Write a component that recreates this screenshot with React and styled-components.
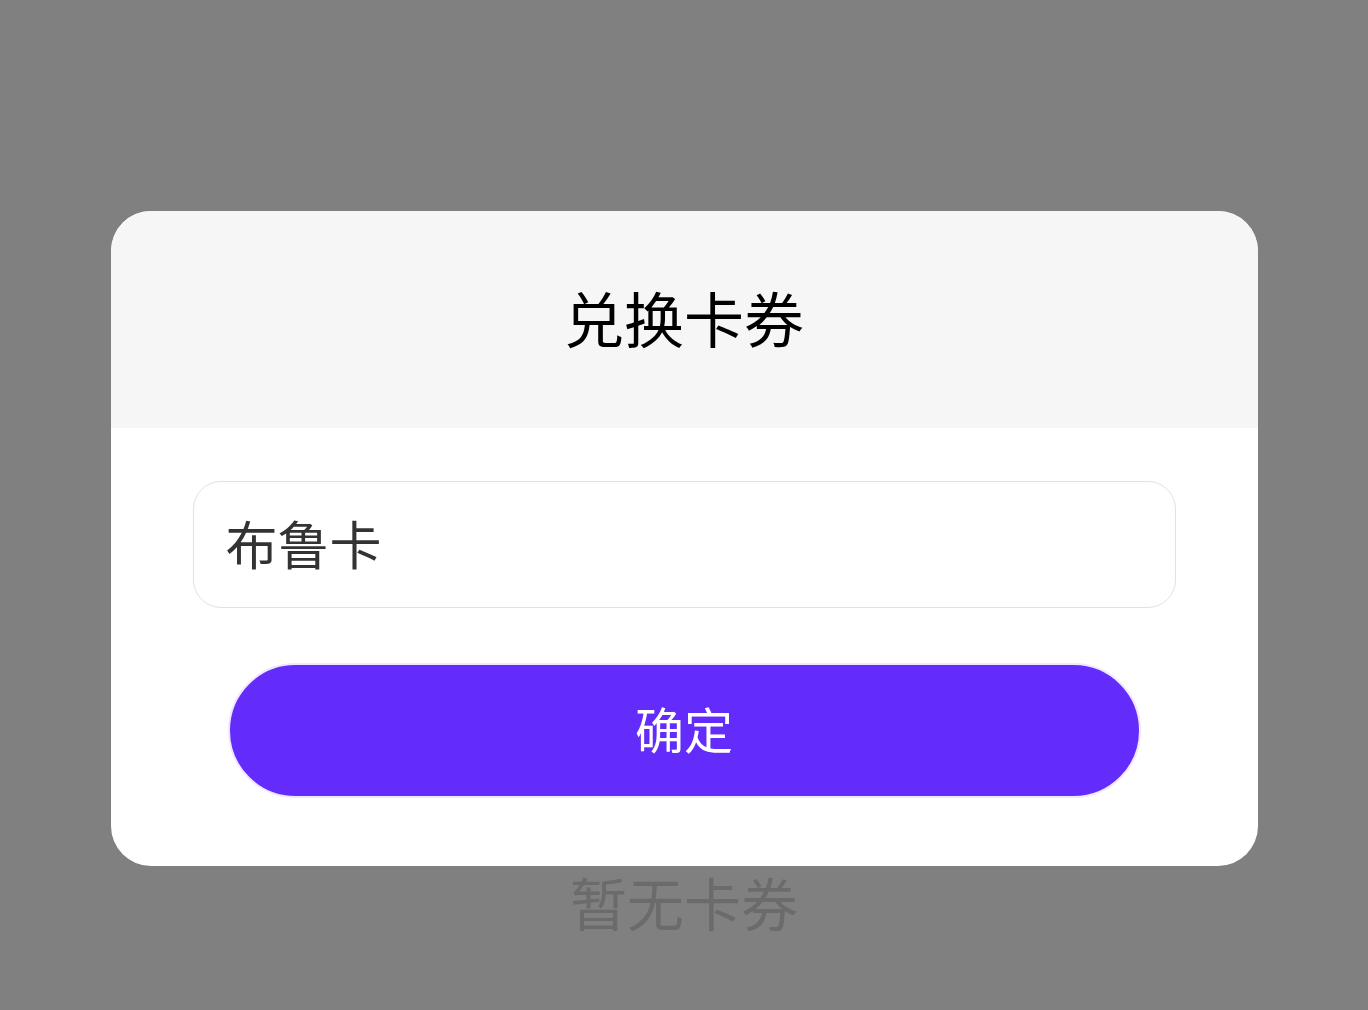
import React, { useState } from 'react';
import styled, { createGlobalStyle } from 'styled-components';

const GlobalStyle = createGlobalStyle`
  html, body {
    margin: 0;
    padding: 0;
    background-color: #808080;
    font-family: "Noto Sans CJK SC", "Noto Sans", sans-serif;
  }
`;

const Page = styled.div`
  min-height: 1010px;
  display: flex;
  flex-direction: column;
  align-items: center;
  padding-top: 211px;
  box-sizing: border-box;
`;

const Modal = styled.div`
  width: 1147px;
  background-color: #fff;
  border-radius: 40px;
  overflow: hidden;
  display: flex;
  flex-direction: column;
`;

const Header = styled.div`
  height: 217px;
  background-color: #f6f6f6;
  display: flex;
  align-items: center;
  justify-content: center;
`;

const Title = styled.h2`
  margin: 0 0 6px;
  font-size: 60px;
  font-weight: 400;
  color: #000;
  line-height: 1;
`;

const Body = styled.div`
  display: flex;
  flex-direction: column;
  padding: 53px 82px 68px;
`;

const Input = styled.input`
  height: 127px;
  box-sizing: border-box;
  border: 1px solid #e2e2e2;
  border-radius: 28px;
  padding: 0 32px 4px;
  font-family: inherit;
  font-size: 52px;
  color: #333;
  outline: none;
  background: #fff;
`;

const Button = styled.button`
  margin: 55px 35px 0;
  height: 135px;
  border: 2px solid #efe6ff;
  border-radius: 68px;
  background-color: #632cfa;
  color: #fff;
  font-family: inherit;
  font-size: 49px;
  padding: 0 0 6px;
  cursor: pointer;
`;

const EmptyText = styled.div`
  margin-top: -4px;
  font-size: 57px;
  line-height: 78px;
  color: #6b6b6b;
`;

const App = () => {
  const [code, setCode] = useState('布鲁卡');
  return (
    <>
      <GlobalStyle />
      <Page>
        <Modal>
          <Header>
            <Title>兑换卡券</Title>
          </Header>
          <Body>
            <Input value={code} onChange={(e) => setCode(e.target.value)} />
            <Button>确定</Button>
          </Body>
        </Modal>
        <EmptyText>暂无卡券</EmptyText>
      </Page>
    </>
  );
};

export default App;
